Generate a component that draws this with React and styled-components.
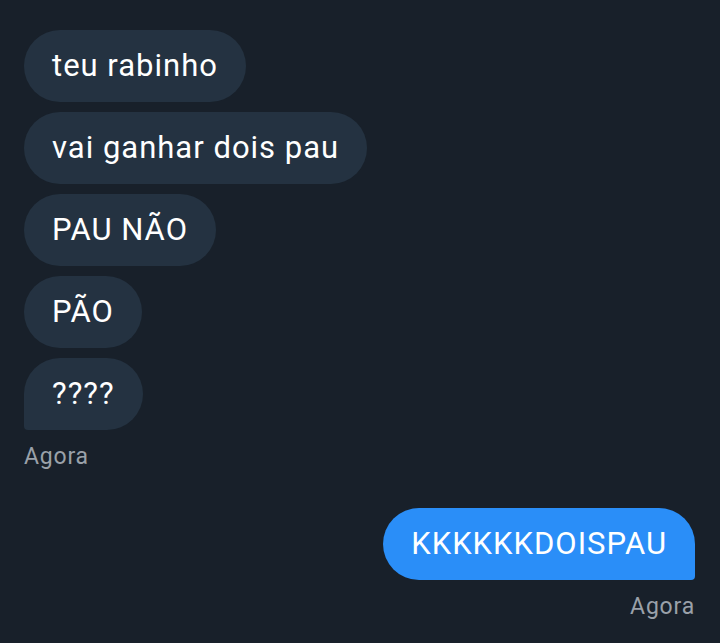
import React from 'react';
import styled, { createGlobalStyle } from 'styled-components';

const GlobalStyle = createGlobalStyle`
  html, body {
    margin: 0;
    padding: 0;
    background: #18202a;
  }
  body {
    font-family: Roboto, "Noto Sans", sans-serif;
  }
`;

const Thread = styled.div`
  display: flex;
  flex-direction: column;
  padding: 30px 25px 0 24px;
  min-height: 643px;
  box-sizing: border-box;
`;

const Group = styled.div`
  display: flex;
  flex-direction: column;
  align-items: ${({ mine }) => (mine ? 'flex-end' : 'flex-start')};
  gap: 10px;
  margin-bottom: ${({ mine }) => (mine ? '0' : '38px')};
`;

const Bubble = styled.div`
  display: flex;
  align-items: center;
  height: 72px;
  box-sizing: border-box;
  padding: 0 28px 1px 28px;
  border-radius: 36px;
  background: ${({ mine }) => (mine ? '#2a8ef8' : '#243241')};
  color: #ffffff;
  font-size: 31px;
  letter-spacing: 1px;
  white-space: nowrap;
  ${({ last, mine }) =>
    last && (mine ? 'border-bottom-right-radius: 4px;' : 'border-bottom-left-radius: 4px;')}
`;

const Time = styled.div`
  color: #9aa1a9;
  font-size: 23px;
  margin-top: 3px;
  letter-spacing: 0.8px;
`;

const received = ['teu rabinho', 'vai ganhar dois pau', 'PAU NÃO', 'PÃO', '????'];

export default function App() {
  return (
    <>
      <GlobalStyle />
      <Thread>
        <Group>
          {received.map((text, i) => (
            <Bubble key={i} last={i === received.length - 1}>
              {text}
            </Bubble>
          ))}
          <Time>Agora</Time>
        </Group>
        <Group mine>
          <Bubble mine last>KKKKKKDOISPAU</Bubble>
          <Time>Agora</Time>
        </Group>
      </Thread>
    </>
  );
}
